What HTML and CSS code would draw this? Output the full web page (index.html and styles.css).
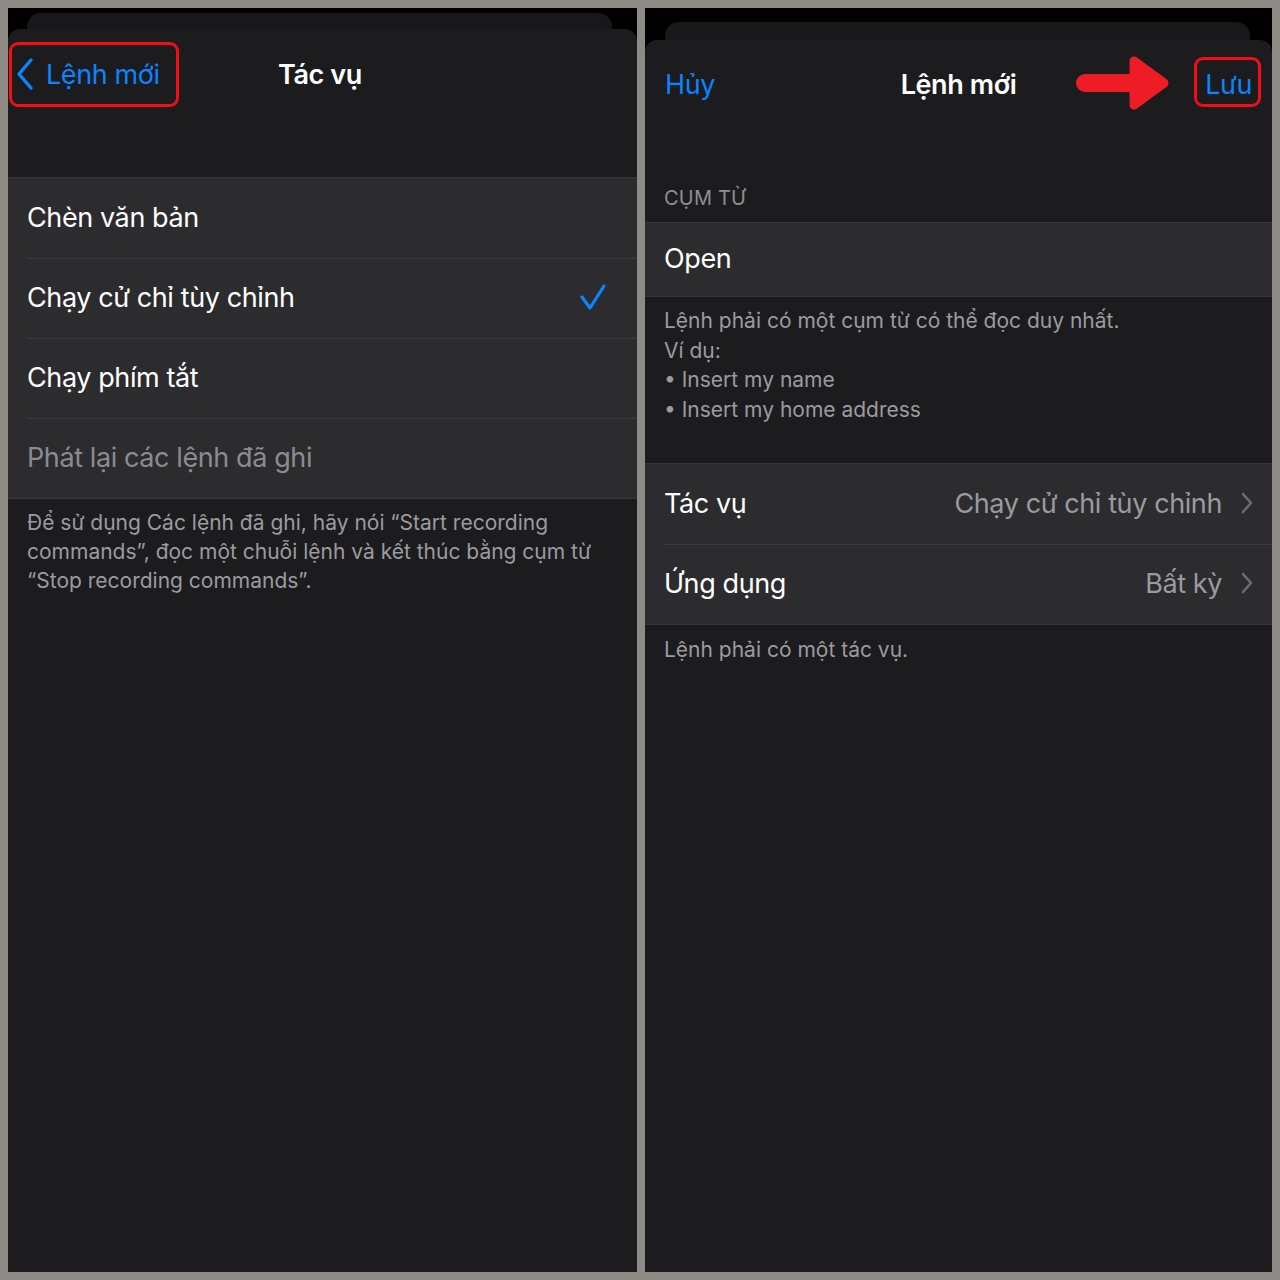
FILE: index.html
```html
<!DOCTYPE html>
<html lang="vi">
<head>
<meta charset="utf-8">
<title>Lệnh mới</title>
<link rel="stylesheet" href="styles.css">
</head>
<body>
<div class="frame">
  <section class="panel panel-left">
    <div class="backcard backcard-left"></div>
    <div class="sheet">
      <header class="nav nav-left">
        <div class="nav-side">
          <span class="back-btn">
            <svg class="back-chevron" width="18" height="34" viewBox="0 0 18 34"><path d="M15 3 L3 17 L15 31" fill="none" stroke="#0a84ff" stroke-width="3.4" stroke-linecap="round" stroke-linejoin="round"/></svg>
            <span class="link">Lệnh mới</span>
            <span class="ring ring-back"></span>
          </span>
        </div>
        <h1 class="nav-title">Tác vụ</h1>
        <div class="nav-side"></div>
      </header>

      <ul class="group group-left">
        <li class="row"><span class="row-label">Chèn văn bản</span></li>
        <li class="row"><span class="row-label">Chạy cử chỉ tùy chỉnh</span>
          <svg class="check" width="28" height="28" viewBox="0 0 28 28"><path d="M3 14 L11 25 L25 3" fill="none" stroke="#0a84ff" stroke-width="3.2" stroke-linecap="round" stroke-linejoin="round"/></svg>
        </li>
        <li class="row"><span class="row-label">Chạy phím tắt</span></li>
        <li class="row"><span class="row-label dim">Phát lại các lệnh đã ghi</span></li>
      </ul>
      <p class="footnote footnote-left">Để sử dụng Các lệnh đã ghi, hãy nói “Start recording<br>commands”, đọc một chuỗi lệnh và kết thúc bằng cụm từ<br>“Stop recording commands”.</p>
    </div>
  </section>

  <section class="panel panel-right">
    <div class="backcard backcard-right"></div>
    <div class="sheet">
      <header class="nav nav-right">
        <div class="nav-side"><span class="link">Hủy</span></div>
        <h1 class="nav-title">Lệnh mới</h1>
        <div class="nav-side nav-side-end">
          <svg class="arrow" width="98" height="58" viewBox="0 0 98 58"><line x1="11" y1="28" x2="58" y2="28" stroke="#ee1c25" stroke-width="18" stroke-linecap="round"/><polygon points="60,6 90,28 60,50" fill="#ee1c25" stroke="#ee1c25" stroke-width="9" stroke-linejoin="round"/></svg>
          <span class="save-btn"><span class="link">Lưu</span><span class="ring ring-save"></span></span>
        </div>
      </header>

      <h2 class="section-head">CỤM TỪ</h2>
      <div class="group group-phrase">
        <div class="row row-open"><span class="row-label">Open</span></div>
      </div>
      <div class="footnote footnote-phrase">
        <p>Lệnh phải có một cụm từ có thể đọc duy nhất.</p>
        <p>Ví dụ:</p>
        <p>• Insert my name</p>
        <p>• Insert my home address</p>
      </div>

      <ul class="group group-action">
        <li class="row"><span class="row-label">Tác vụ</span><span class="row-value">Chạy cử chỉ tùy chỉnh</span>
          <svg class="chev" width="14" height="22" viewBox="0 0 14 22"><path d="M3 2 L11 11 L3 20" fill="none" stroke="#6c6c70" stroke-width="2.6" stroke-linecap="round" stroke-linejoin="round"/></svg></li>
        <li class="row"><span class="row-label">Ứng dụng</span><span class="row-value">Bất kỳ</span>
          <svg class="chev" width="14" height="22" viewBox="0 0 14 22"><path d="M3 2 L11 11 L3 20" fill="none" stroke="#6c6c70" stroke-width="2.6" stroke-linecap="round" stroke-linejoin="round"/></svg></li>
      </ul>
      <p class="footnote footnote-action">Lệnh phải có một tác vụ.</p>
    </div>
  </section>
</div>
</body>
</html>
```

FILE: styles.css
```css
* { box-sizing: border-box; }
html, body { margin: 0; padding: 0; }
body {
  width: 1280px;
  height: 1280px;
  background: #8e8a86;
  font-family: Inter, Roboto, "Noto Sans", "Liberation Sans", sans-serif;
  color: #fff;
  overflow: hidden;
}
ul, p, h1, h2 { margin: 0; padding: 0; list-style: none; }

.frame {
  display: flex;
  gap: 8px;
  padding: 8px;
  height: 1280px;
}
.panel {
  height: 1264px;
  background: #000;
  display: flex;
  flex-direction: column;
  overflow: hidden;
}
.panel-left { width: 629px; }
.panel-right { width: 627px; }

.backcard {
  background: #18181a;
  border-radius: 14px 14px 0 0;
  flex: none;
}
.backcard-left { margin: 5px 25px 0 19px; height: 16px; }
.backcard-right { margin: 14px 22px 0 20px; height: 18px; }

.sheet {
  flex: 1;
  background: #1c1c1e;
  border-radius: 12px 12px 0 0;
  display: flex;
  flex-direction: column;
}

.nav {
  display: grid;
  grid-template-columns: 1fr auto 1fr;
  align-items: center;
  flex: none;
}
.nav-left { height: 90px; padding: 0 0 0 1px; }
.nav-right { height: 88px; padding: 0 20px; }
.nav-title {
  font-size: 27px;
  font-weight: 600;
  color: #fff;
  letter-spacing: -0.4px;
}
.nav-left .nav-title { transform: translateX(-3px); }
.nav-side { display: flex; align-items: center; }
.nav-side-end { justify-content: flex-end; }
.link {
  color: #0a84ff;
  font-size: 27px;
  letter-spacing: -0.4px;
}
.back-btn {
  position: relative;
  display: flex;
  align-items: center;
  gap: 12px;
  padding-left: 7px;
  height: 65px;
  width: 170px;
}
.ring {
  position: absolute;
  border: 3px solid #f20d17;
  border-radius: 9px;
  pointer-events: none;
}
.ring-back { left: 0; top: 0; width: 170px; height: 65px; }
.save-btn {
  position: relative;
  display: flex;
  align-items: center;
  margin-left: 33px;
}
.ring-save { left: -11px; top: -11px; width: 67px; height: 50px; }
.arrow { display: block; }

.group {
  background: #2c2c2e;
  border-top: 1px solid #363638;
  border-bottom: 1px solid #363638;
  flex: none;
}
.group-left { margin-top: 58px; }
.row {
  display: flex;
  align-items: center;
  height: 80px;
  padding: 0 20px 2px 19px;
  position: relative;
}
.row + .row::before {
  content: "";
  position: absolute;
  top: 0;
  left: 19px;
  right: 0;
  border-top: 1px solid #3a3a3c;
}
.row-label {
  font-size: 27px;
  color: #fff;
  letter-spacing: -0.4px;
  flex: 1;
}
.row-label.dim { color: #8b8b90; }
.check { margin-right: 10px; }
.row-value {
  font-size: 27px;
  color: #9a9a9f;
  letter-spacing: -0.4px;
  margin-right: 18px;
}
.chev { flex: none; margin-right: -2px; }

.footnote {
  color: #9b9ba0;
  font-size: 21px;
  line-height: 29px;
  letter-spacing: 0;
}
.footnote-left { padding: 9px 20px 0 19px; }

.section-head {
  font-size: 20px;
  font-weight: 400;
  color: #8e8e93;
  line-height: 24px;
  margin: 58px 0 12px 19px;
  letter-spacing: 0.2px;
}
.row-open { height: 73px; }
.footnote-phrase { padding: 9px 19px 0; line-height: 29.6px; }
.group-action { margin-top: 39px; }
.footnote-action { padding: 10px 19px 0; }
```
